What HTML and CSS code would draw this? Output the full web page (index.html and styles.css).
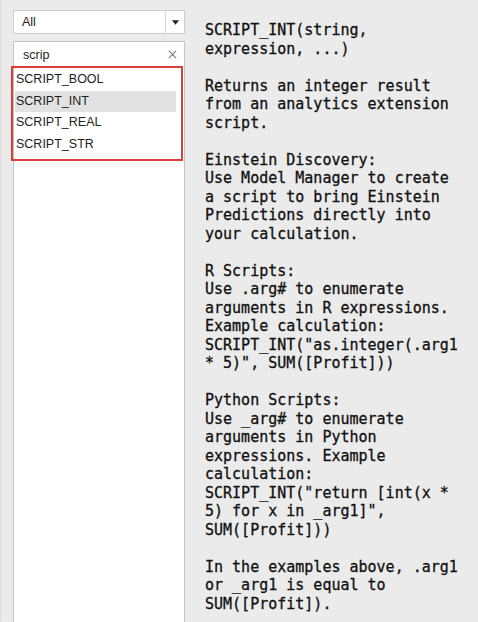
FILE: index.html
```html
<!DOCTYPE html>
<html>
<head>
<meta charset="utf-8">
<link rel="stylesheet" href="styles.css">
</head>
<body>
<div class="app">
  <div class="side">
    <div class="select">
      <span class="select-label">All</span>
      <span class="select-btn"><svg width="8" height="5" viewBox="0 0 8 5"><path d="M0 0H8L4 5Z" fill="#222"/></svg></span>
    </div>
    <div class="panel">
      <div class="search">
        <span class="search-text">scrip</span>
        <svg class="clear" width="10" height="10" viewBox="0 0 10 10"><path d="M1 1L9 9M9 1L1 9" stroke="#777" stroke-width="1.2"/></svg>
      </div>
      <ul class="results">
        <li class="item">SCRIPT_BOOL</li>
        <li class="item selected">SCRIPT_INT</li>
        <li class="item">SCRIPT_REAL</li>
        <li class="item">SCRIPT_STR</li>
      </ul>
    </div>
  </div>
  <div class="doc">
<p class="sig">SCRIPT_INT(string,
expression, ...)</p>
<p>Returns an integer result
from an analytics extension
script.</p>
<p>Einstein Discovery:
Use Model Manager to create
a script to bring Einstein
Predictions directly into
your calculation.</p>
<p>R Scripts:
Use .arg# to enumerate
arguments in R expressions.
Example calculation:
SCRIPT_INT("as.integer(.arg1
* 5)", SUM([Profit]))</p>
<p>Python Scripts:
Use _arg# to enumerate
arguments in Python
expressions. Example
calculation:
SCRIPT_INT("return [int(x *
5) for x in _arg1]",
SUM([Profit]))</p>
<p>In the examples above, .arg1
or _arg1 is equal to
SUM([Profit]).</p>
  </div>
</div>
</body>
</html>
```
FILE: styles.css
```css
html, body {
  margin: 0;
  padding: 0;
  height: 100%;
  overflow: hidden;
}
body {
  background: #ebebeb;
  font-family: "Liberation Sans", Arial, sans-serif;
  color: #1e1e1e;
}
.app {
  display: flex;
  height: 100%;
  border-left: 1px dotted #d0d0d0;
  box-sizing: border-box;
}
.side {
  width: 172px;
  margin-left: 12px;
  padding-top: 10px;
  display: flex;
  flex-direction: column;
}
.select {
  height: 24px;
  box-sizing: border-box;
  border: 1px solid #cdcdcd;
  background: #fff;
  display: flex;
  align-items: center;
}
.select-label {
  flex: 1;
  padding-left: 8px;
  font-size: 12.5px;
}
.select-btn {
  width: 18px;
  height: 100%;
  border-left: 1px solid #d8d8d8;
  display: flex;
  align-items: center;
  justify-content: center;
}
.select-btn svg { width: 7px; height: 5px; }
.panel {
  margin-top: 7px;
  flex: 1;
  background: #fff;
  border: 1px solid #c4c4c4;
  border-bottom: none;
  display: flex;
  flex-direction: column;
}
.search {
  height: 24px;
  display: flex;
  align-items: center;
  padding: 0 7px 0 9px;
}
.search-text {
  flex: 1;
  font-size: 12.5px;
  padding-top: 1px;
}
.clear { width: 9px; height: 9px; }
.results {
  list-style: none;
  margin: 0 1px 0 -3px;
  padding: 1px 5px 4px 2px;
  border: 2px solid #da3f39;
}
.item {
  height: 21.5px;
  line-height: 21.5px;
  font-size: 12.5px;
  padding-left: 1px;
}
.item.selected {
  background: #e2e2e2;
}
.doc {
  margin-left: 20px;
  padding-top: 21px;
  font-family: "DejaVu Sans Mono", monospace;
  font-size: 15px;
  line-height: 18.5px;
  color: #111;
  -webkit-text-stroke: 0.3px #111;
}
.doc p {
  margin: 0 0 18.5px 0;
  white-space: pre;
}
```
